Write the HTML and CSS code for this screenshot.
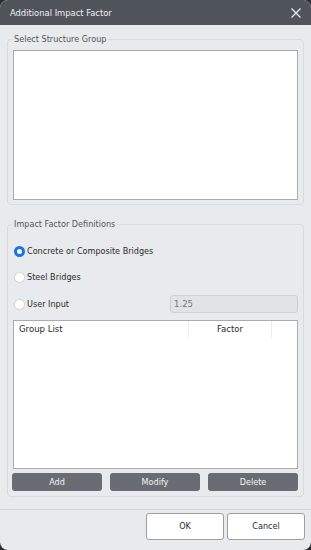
FILE: index.html
```html
<!DOCTYPE html>
<html>
<head>
<meta charset="utf-8">
<link rel="stylesheet" href="styles.css">
</head>
<body>
<div class="dialog">
  <div class="titlebar">
    <span class="title">Additional Impact Factor</span>
    <svg class="close" width="12" height="12" viewBox="0 0 12 12"><path d="M1.5 1.5 L10.5 10.5 M10.5 1.5 L1.5 10.5" stroke="#e8e9eb" stroke-width="1.3" fill="none"/></svg>
  </div>
  <div class="content">
    <fieldset class="group g1">
      <legend>Select Structure Group</legend>
      <div class="listbox"></div>
    </fieldset>
    <fieldset class="group g2">
      <legend>Impact Factor Definitions</legend>
      <div class="radio-row r1"><span class="radio checked"></span><span>Concrete or Composite Bridges</span></div>
      <div class="radio-row"><span class="radio"></span><span>Steel Bridges</span></div>
      <div class="radio-row user"><span class="radio"></span><span>User Input</span><div class="input">1.25</div></div>
      <div class="table">
        <div class="thead">
          <div class="th c1">Group List</div>
          <div class="th c2">Factor</div>
          <div class="th c3"></div>
        </div>
      </div>
      <div class="btns">
        <div class="btn">Add</div>
        <div class="btn">Modify</div>
        <div class="btn">Delete</div>
      </div>
    </fieldset>
  </div>
  <div class="footer">
    <div class="fbtn">OK</div>
    <div class="fbtn">Cancel</div>
  </div>
</div>
</body>
</html>
```
FILE: styles.css
```css
* { box-sizing: border-box; }
html, body { margin: 0; padding: 0; background: #2a2c2f; }
body { font-family: "DejaVu Sans Condensed", "Liberation Sans", sans-serif; font-size: 9px; color: #2b2b2b; }
.dialog {
  width: 311px; height: 550px; background: #e9eaed; border-radius: 8px; overflow: hidden;
  display: flex; flex-direction: column;
}
.titlebar {
  height: 25px; background: #4f545a; display: flex; align-items: center; justify-content: space-between;
  padding: 0 9px 0 10px; color: #f1f2f3;
}
.title { font-size: 9.3px; }
.close { display: block; }
.content { padding: 7px 7px 0 7px; display: flex; flex-direction: column; }
.group {
  margin: 0; border: 1px solid #d9dadd; border-radius: 4px; padding: 0 5px; min-width: 0;
}
.group legend { padding: 0 2px; margin-left: -1px; color: #555; font-size: 9px; line-height: 14px; }
.g1 { height: 173px; padding-top: 4px; }
.listbox { height: 150px; background: #fff; border: 1px solid #a9abaf; }
.g2 { margin-top: 12px; height: 280px; padding-top: 13px; }
.radio-row { display: flex; align-items: center; height: 14px; margin-bottom: 11px; }
.radio-row.r1 { margin-bottom: 12px; }
.radio { width: 11px; height: 11px; border-radius: 50%; background: #fff; border: 1px solid #d2d3d6; margin: 0 2px 0 1px; flex: none; }
.radio.checked { border: 3px solid #1a73e8; background: #fff; }
.radio-row.user { margin-bottom: 7px; height: 18px; }
.input {
  margin-left: auto; width: 128px; height: 18px; background: #e2e3e6; border: 1px solid #cfd0d3; border-radius: 3px;
  color: #777; padding-left: 3px; line-height: 16px; font-size: 9.5px;
}
.table { height: 149px; background: #fff; border: 1px solid #a9abaf; }
.thead { display: flex; height: 17px; }
.th { line-height: 16px; font-size: 9.5px; }
.c1 { width: 175px; padding-left: 5px; border-right: 1px solid #ececee; }
.c2 { width: 83px; text-align: center; border-right: 1px solid #ececee; }
.c3 { flex: 1; }
.btns { display: flex; justify-content: space-between; margin-top: 4px; margin-left: -1px; }
.btn {
  width: 90px; height: 18px; background: #696d73; border-radius: 3px; color: #f4f4f5; text-align: center;
  line-height: 18px; font-size: 9px;
}
.footer {
  margin-top: auto; border-top: 1px solid #d4d5d8; height: 41px; display: flex; justify-content: flex-end;
  padding: 3px 6px 0 0; gap: 3px;
}
.fbtn {
  width: 78px; height: 27px; background: #fff; border: 1px solid #9c9ea2; border-radius: 3px; text-align: center;
  line-height: 25px; font-size: 9px;
}
```
